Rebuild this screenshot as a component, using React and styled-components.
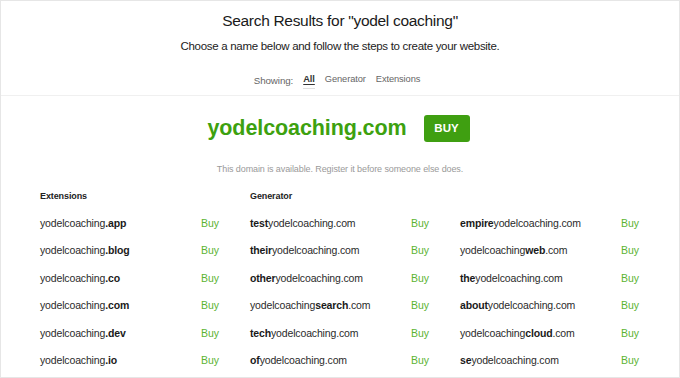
import styled, { createGlobalStyle } from "styled-components";

const GlobalStyle = createGlobalStyle`
  html, body {
    margin: 0;
    padding: 0;
    background: #ffffff;
  }
  body {
    font-family: "Liberation Sans", Arial, sans-serif;
    color: #222222;
  }
`;

const extensions = [".app", ".blog", ".co", ".com", ".dev", ".io"];

const generatorLeft = [
  { pre: "test", post: "" },
  { pre: "their", post: "" },
  { pre: "other", post: "" },
  { pre: "", post: "search" },
  { pre: "tech", post: "" },
  { pre: "of", post: "" },
];

const generatorRight = [
  { pre: "empire", post: "" },
  { pre: "", post: "web" },
  { pre: "the", post: "" },
  { pre: "about", post: "" },
  { pre: "", post: "cloud" },
  { pre: "se", post: "" },
];

function App() {
  return (
    <>
      <GlobalStyle />
      <Frame>
        <Header>
          <Title>Search Results for "yodel coaching"</Title>
          <Subtitle>Choose a name below and follow the steps to create your website.</Subtitle>
          <Filters>
            <FilterLabel>Showing:</FilterLabel>
            <FilterTab $active>All</FilterTab>
            <FilterTab>Generator</FilterTab>
            <FilterTab>Extensions</FilterTab>
          </Filters>
        </Header>

        <Featured>
          <FeaturedRow>
            <FeaturedDomain>yodelcoaching.com</FeaturedDomain>
            <BigBuy>BUY</BigBuy>
          </FeaturedRow>
          <Available>This domain is available. Register it before someone else does.</Available>
        </Featured>

        <Results>
          <Column>
            <ColumnTitle>Extensions</ColumnTitle>
            {extensions.map((ext) => (
              <Row key={ext}>
                <Name>
                  yodelcoaching<b>{ext}</b>
                </Name>
                <BuyLink>Buy</BuyLink>
              </Row>
            ))}
          </Column>
          <Column>
            <ColumnTitle>Generator</ColumnTitle>
            {generatorLeft.map((g) => (
              <Row key={g.pre + g.post}>
                <Name>
                  <b>{g.pre}</b>yodelcoaching<b>{g.post}</b>.com
                </Name>
                <BuyLink>Buy</BuyLink>
              </Row>
            ))}
          </Column>
          <Column>
            <ColumnTitle>&nbsp;</ColumnTitle>
            {generatorRight.map((g) => (
              <Row key={g.pre + g.post}>
                <Name>
                  <b>{g.pre}</b>yodelcoaching<b>{g.post}</b>.com
                </Name>
                <BuyLink>Buy</BuyLink>
              </Row>
            ))}
          </Column>
        </Results>
      </Frame>
    </>
  );
}
export default App;

const Frame = styled.div`
  width: 678px;
  height: 376px;
  border: 1px solid #e6e6e6;
  overflow: hidden;
  background: #ffffff;
`;

const Header = styled.div`
  display: flex;
  flex-direction: column;
  align-items: center;
  padding-top: 10px;
  height: 84px;
  border-bottom: 1px solid #f0f0f0;
`;

const Title = styled.h1`
  margin: 0;
  font-size: 15.5px;
  letter-spacing: -0.3px;
  font-weight: 500;
  line-height: 20px;
  color: #1a1a1a;
`;

const Subtitle = styled.p`
  margin: 7px 0 0;
  font-size: 11.5px;
  letter-spacing: -0.3px;
  line-height: 16px;
  color: #222222;
`;

const Filters = styled.div`
  display: flex;
  align-items: center;
  gap: 10px;
  margin-top: 18px;
  margin-left: -6px;
  font-size: 9.3px;
  letter-spacing: -0.1px;
  line-height: 14px;
`;

const FilterLabel = styled.span`
  color: #666666;
  font-size: 9.8px;
`;

const FilterTab = styled.span`
  color: ${(p) => (p.$active ? "#333333" : "#666666")};
  font-weight: ${(p) => (p.$active ? 700 : 400)};
  text-decoration: ${(p) => (p.$active ? "underline" : "none")};
  text-underline-offset: 2px;
  border-bottom: ${(p) => (p.$active ? "1px solid #e0e0e0" : "1px solid transparent")};
  padding-bottom: 2px;
`;

const Featured = styled.div`
  display: flex;
  flex-direction: column;
  align-items: center;
  padding-top: 18px;
`;

const FeaturedRow = styled.div`
  display: flex;
  align-items: center;
  gap: 17px;
  margin-left: -3px;
`;

const FeaturedDomain = styled.div`
  font-size: 21.5px;
  letter-spacing: -0.1px;
  font-weight: 700;
  color: #3da10f;
  line-height: 28px;
`;

const BigBuy = styled.button`
  width: 46px;
  height: 27px;
  border: none;
  border-radius: 3px;
  background: #3f9f11;
  color: #ffffff;
  font-family: inherit;
  font-size: 11.5px;
  font-weight: 700;
  padding: 0;
`;

const Available = styled.div`
  margin-top: 20px;
  font-size: 9px;
  letter-spacing: -0.1px;
  color: #9a9a9a;
  line-height: 14px;
`;

const Results = styled.div`
  display: grid;
  grid-template-columns: repeat(3, 180px);
  column-gap: 30px;
  padding: 13px 39px 0;
`;

const Column = styled.div`
  display: flex;
  flex-direction: column;
`;

const ColumnTitle = styled.div`
  font-size: 9px;
  letter-spacing: -0.1px;
  font-weight: 700;
  color: #222222;
  line-height: 14px;
  margin-bottom: 6px;
`;

const Row = styled.div`
  display: flex;
  justify-content: space-between;
  align-items: center;
  height: 27.5px;
`;

const Name = styled.span`
  font-size: 10.5px;
  letter-spacing: -0.15px;
  color: #2a2a2a;
  b {
    font-weight: 700;
    color: #1a1a1a;
  }
`;

const BuyLink = styled.span`
  font-size: 10.5px;
  color: #5bb332;
  padding-right: 1px;
`;
